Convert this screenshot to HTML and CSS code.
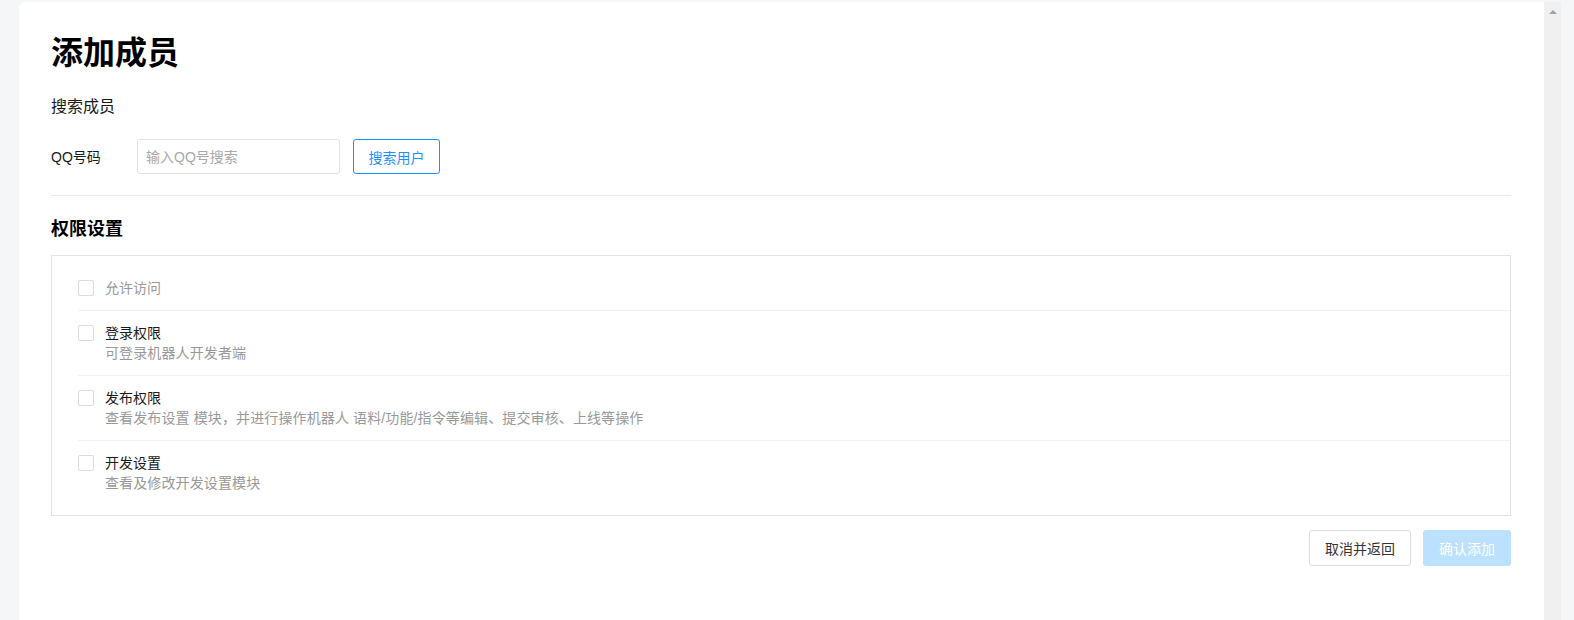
FILE: index.html
```html
<!DOCTYPE html>
<html lang="zh-CN">

<head>
  <meta charset="UTF-8">
  <meta name="viewport" content="width=device-width, initial-scale=1.0">
  <title>添加成员</title>
  <link rel="stylesheet" href="styles.css">
</head>

<body>
  <div class="frame">
    <div class="card">
      <h1 class="page-title">添加成员</h1>
      <div class="section-label">搜索成员</div>
      <div class="search-row">
        <label class="field-label" for="qq">QQ号码</label>
        <input type="text" id="qq" class="qq-input" placeholder="输入QQ号搜索">
        <button class="btn btn-outline">搜索用户</button>
      </div>
      <div class="divider"></div>

      <h3 class="sub-title">权限设置</h3>
      <div class="perm-box">
        <div class="perm-item">
          <span class="check"></span>
          <div class="perm-text">
            <div class="perm-name muted">允许访问</div>
          </div>
        </div>
        <div class="perm-item">
          <span class="check"></span>
          <div class="perm-text">
            <div class="perm-name">登录权限</div>
            <div class="perm-desc">可登录机器人开发者端</div>
          </div>
        </div>
        <div class="perm-item">
          <span class="check"></span>
          <div class="perm-text">
            <div class="perm-name">发布权限</div>
            <div class="perm-desc">查看发布设置 模块，并进行操作机器人 语料/功能/指令等编辑、提交审核、上线等操作</div>
          </div>
        </div>
        <div class="perm-item">
          <span class="check"></span>
          <div class="perm-text">
            <div class="perm-name">开发设置</div>
            <div class="perm-desc">查看及修改开发设置模块</div>
          </div>
        </div>
      </div>

      <div class="actions">
        <button class="btn btn-default">取消并返回</button>
        <button class="btn btn-primary" disabled>确认添加</button>
      </div>
    </div>
    <div class="scrollbar">
      <span class="arrow-up"></span>
    </div>
  </div>
</body>

</html>
```

FILE: styles.css
```css
body {
  margin: 0;
  padding: 2px 13px 0 19px;
  background-color: #f5f6f8;
  font-family: "Liberation Sans", "Noto Sans CJK SC", sans-serif;
  font-size: 14px;
  color: #1a1a1a;
  overflow: hidden;
}

.frame {
  display: flex;
  height: 640px;
}

.card {
  flex: 1;
  background: white;
  border-top-left-radius: 6px;
  padding: 29px 33px 0 32px;
}

.scrollbar {
  width: 17px;
  background-color: #f0f0f0;
  display: flex;
  justify-content: center;
  padding-top: 8px;
  box-sizing: border-box;
}

.arrow-up {
  width: 0;
  height: 0;
  border-left: 4px solid transparent;
  border-right: 4px solid transparent;
  border-bottom: 4px solid #a3a3a3;
}

.page-title {
  margin: 0;
  font-size: 32px;
  line-height: 44px;
  font-weight: bold;
  color: #000;
}

.section-label {
  margin-top: 21px;
  font-size: 16px;
  line-height: 22px;
}

.search-row {
  display: flex;
  align-items: center;
  margin-top: 21px;
  height: 35px;
}

.field-label {
  width: 86px;
  line-height: 20px;
}

.qq-input {
  width: 203px;
  height: 35px;
  box-sizing: border-box;
  padding: 0 8px;
  border: 1px solid #e2e2e2;
  border-radius: 3px;
  font-family: inherit;
  font-size: 14px;
  color: #333;
  outline: none;
}

.qq-input::placeholder {
  color: #a9a9a9;
}

.btn {
  height: 36px;
  box-sizing: border-box;
  border-radius: 3px;
  font-family: inherit;
  font-size: 14px;
  cursor: pointer;
}

.btn-outline {
  margin-left: 13px;
  width: 87px;
  height: 35px;
  background: white;
  border: 1px solid #1e90ff;
  color: #1e90ff;
}

.divider {
  margin-top: 21px;
  height: 1px;
  background-color: #ececec;
}

.sub-title {
  margin: 20px 0 0;
  font-size: 18px;
  line-height: 26px;
  font-weight: bold;
  color: #000;
}

.perm-box {
  margin-top: 13px;
  border: 1px solid #e3e3e3;
  padding: 10px 0 10px 26px;
}

.perm-item {
  display: flex;
  gap: 11px;
  padding: 12px 0;
  border-bottom: 1px solid #f0f0f0;
}

.perm-item:last-child {
  border-bottom: none;
}

.check {
  width: 16px;
  height: 16px;
  margin-top: 2px;
  box-sizing: border-box;
  border: 1px solid #dcdcdc;
  border-radius: 2px;
  flex-shrink: 0;
}

.perm-name {
  line-height: 20px;
  color: #1a1a1a;
}

.perm-name.muted {
  color: #999;
}

.perm-desc {
  line-height: 20px;
  color: #999;
  letter-spacing: 0.12px;
}

.actions {
  display: flex;
  justify-content: flex-end;
  gap: 12px;
  margin-top: 14px;
}

.btn-default {
  width: 102px;
  background: white;
  border: 1px solid #dedede;
  color: #333;
}

.btn-primary {
  width: 88px;
  background-color: #bbe1ff;
  border: 1px solid #bbe1ff;
  color: white;
  cursor: not-allowed;
}
```
